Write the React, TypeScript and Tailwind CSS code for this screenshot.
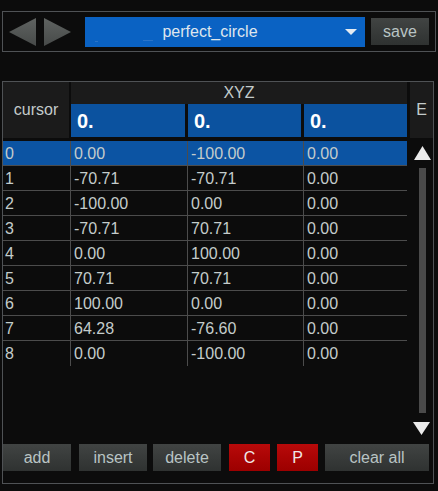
import React from 'react';

const rows: string[][] = [
  ['0', '0.00', '-100.00', '0.00'],
  ['1', '-70.71', '-70.71', '0.00'],
  ['2', '-100.00', '0.00', '0.00'],
  ['3', '-70.71', '70.71', '0.00'],
  ['4', '0.00', '100.00', '0.00'],
  ['5', '70.71', '70.71', '0.00'],
  ['6', '100.00', '0.00', '0.00'],
  ['7', '64.28', '-76.60', '0.00'],
  ['8', '0.00', '-100.00', '0.00'],
];

function Arrow({ dir }: { dir: 'left' | 'right' }) {
  const pts = dir === 'left' ? '0,14 27,0 27,28' : '0,0 27,14 0,28';
  return (
    <svg width="27" height="28" viewBox="0 0 27 28">
      <defs>
        <linearGradient id={`g-${dir}`} x1="0" y1="0" x2="0" y2="1">
          <stop offset="0" stopColor="#5f6361" />
          <stop offset="1" stopColor="#474a49" />
        </linearGradient>
      </defs>
      <polygon points={pts} fill={`url(#g-${dir})`} />
    </svg>
  );
}

function GrayButton({ label, className }: { label: string; className: string }) {
  return (
    <div
      className={`h-[27px] flex items-center justify-center bg-gradient-to-b from-[#414443] to-[#2f3231] text-[#b9c4c4] text-[16px] ${className}`}
    >
      {label}
    </div>
  );
}

function RedButton({ label, className }: { label: string; className: string }) {
  return (
    <div
      className={`h-[27px] flex items-center justify-center bg-gradient-to-b from-[#b80a0a] to-[#9c0000] text-[#f0e8e8] text-[16px] ${className}`}
    >
      {label}
    </div>
  );
}

export default function App() {
  return (
    <div className="w-[438px] h-[491px] bg-[#0c0c0c] font-['Liberation_Sans',Arial,sans-serif] overflow-hidden pt-[11px]">
      {/* preset bar */}
      <div className="ml-[2px] w-[434px] h-[41px] border border-[#4f5255] flex items-center">
        <div className="ml-[6px] flex items-center gap-[8px]">
          <Arrow dir="left" />
          <Arrow dir="right" />
        </div>
        <div className="relative ml-[14px] w-[280px] h-[30px] mt-[1px] bg-[#0a62c3] flex items-center pr-[30px]">
          <span className="flex-1 text-center text-[16px] text-[#dfe6ee]">perfect_circle</span>
          <span className="absolute left-[10px] top-[24px] w-[3px] h-[1px] bg-[#2a74c9]" />
          <span className="absolute left-[58px] top-[23px] w-[10px] h-[1px] bg-[#2a74c9]" />
          <svg className="absolute left-[260px] top-[12px]" width="12" height="6" viewBox="0 0 12 6">
            <polygon points="0,0 12,0 6,6" fill="#e4ebf2" />
          </svg>
        </div>
        <GrayButton label="save" className="ml-[6px] w-[58px]" />
      </div>

      {/* table panel */}
      <div className="mt-[29px] ml-[2px] w-[432px] h-[403px] border border-[#4f5255] flex flex-col">
        {/* header */}
        <div className="flex h-[56px]">
          <div className="w-[66px] bg-[#1b1b1b] flex items-center justify-center text-[16px] text-[#c3cbcb]">
            cursor
          </div>
          <div className="w-[2px]" />
          <div className="w-[336px] flex flex-col">
            <div className="h-[22px] bg-[#1b1b1b] flex items-center justify-center text-[16px] text-[#c3cbcb]">
              XYZ
            </div>
            <div className="h-[33px] flex gap-[3px]">
              <div className="w-[114px] bg-[#0b529f] flex items-center pl-[6px] text-[20px] font-bold text-white">0.</div>
              <div className="w-[113px] bg-[#0b529f] flex items-center pl-[6px] text-[20px] font-bold text-white">0.</div>
              <div className="w-[103px] bg-[#0b529f] flex items-center pl-[6px] text-[20px] font-bold text-white">0.</div>
            </div>
          </div>
          <div className="w-[3px]" />
          <div className="w-[23px] bg-[#1b1b1b] flex justify-center pt-[16px] text-[16px] text-[#c3cbcb]">E</div>
        </div>

        {/* body */}
        <div className="mt-[3px] h-[300px] flex">
          <div className="w-[404px]">
            {rows.map((r, i) => {
              const sel = i === 0;
              const last = i === rows.length - 1;
              const cell = `h-[25px] flex items-center pt-[1px] text-[16px] text-[#c4cccb] border-r border-[#4c4c4c] ${
                last ? '' : 'border-b'
              } ${sel ? 'bg-[#0c54a3]' : ''}`;
              return (
                <div key={i} className="flex">
                  <div className={`${cell} w-[68px] pl-[2px]`}>{r[0]}</div>
                  <div className={`${cell} w-[117px] pl-[3px]`}>{r[1]}</div>
                  <div className={`${cell} w-[116px] pl-[3px]`}>{r[2]}</div>
                  <div className={`h-[25px] flex items-center pt-[1px] text-[16px] text-[#c4cccb] w-[103px] pl-[3px] ${
                    last ? '' : 'border-b border-[#4c4c4c]'
                  } ${sel ? 'bg-[#0c54a3]' : ''}`}>{r[3]}</div>
                </div>
              );
            })}
          </div>
          {/* scrollbar */}
          <div className="w-[26px] flex flex-col items-center pt-[5px]">
            <svg width="17" height="14" viewBox="0 0 17 14" className="ml-[4px]">
              <polygon points="8.5,0 17,14 0,14" fill="#ebebeb" />
            </svg>
            <div className="mt-[8px] ml-[4px] w-[7px] h-[245px] bg-[#4a4a4a]" />
            <svg width="17" height="13" viewBox="0 0 17 13" className="mt-[9px] ml-[3px]">
              <polygon points="0,0 17,0 8.5,13" fill="#ebebeb" />
            </svg>
          </div>
        </div>

        {/* buttons */}
        <div className="mt-[3px] flex">
          <GrayButton label="add" className="w-[68px]" />
          <GrayButton label="insert" className="ml-[8px] w-[68px]" />
          <GrayButton label="delete" className="ml-[6px] w-[68px]" />
          <RedButton label="C" className="ml-[8px] w-[41px]" />
          <RedButton label="P" className="ml-[7px] w-[41px]" />
          <GrayButton label="clear all" className="ml-[7px] w-[104px]" />
        </div>
      </div>
    </div>
  );
}
